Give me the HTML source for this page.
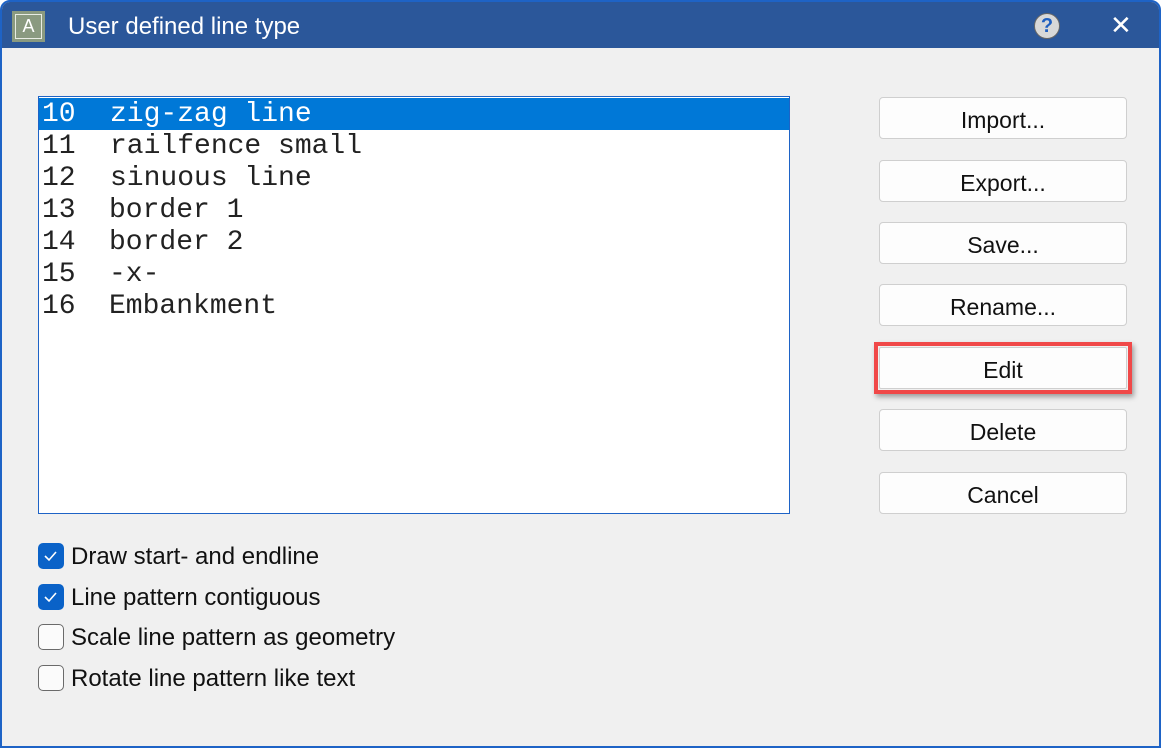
<!DOCTYPE html>
<html><head><meta charset="utf-8"><style>
*{margin:0;padding:0;box-sizing:border-box}
html,body{width:1161px;height:748px;overflow:hidden;background:#fff}
#win{position:absolute;left:0;top:0;width:1161px;height:748px;background:#f0f0f0;border:2px solid #1e63c6;border-radius:10px 10px 0 0;overflow:hidden}
#tb{position:absolute;left:0;top:0;width:100%;height:46px;background:#2b579a}
#title{position:absolute;left:66px;top:11px;color:#fff;font:24px "Liberation Sans",sans-serif}
#icon{position:absolute;left:10px;top:9px;width:33px;height:31px;background:#8a9a80}
#icon div{position:absolute;left:3px;top:3px;width:27px;height:25px;border:1px solid #e8ece4;color:#fff;font:18px "Liberation Sans",sans-serif;text-align:center;line-height:23px}
#help{position:absolute;left:1032px;top:11px;width:26px;height:26px;border-radius:50%;background:#d8d8d8;border:1px solid #666;color:#1f5fc0;font:bold 20px "Liberation Sans",sans-serif;text-align:center;line-height:24px}
#close{position:absolute;left:1108px;top:8px;color:#fff;font:26px "Liberation Sans",sans-serif}
#list{position:absolute;left:36px;top:94px;width:752px;height:418px;background:#fff;border:1px solid #1e63c6}
.row{position:absolute;left:0;width:750px;height:32px;font:28px "Liberation Mono",monospace;color:#222;line-height:34px}
.row span{position:absolute}
.row .n{left:3px}.row .t{left:71px}
.sel{background:#0078d7;color:#fff}
.btn{position:absolute;left:877px;width:248px;height:42px;background:#fdfdfd;border:1px solid #cfcfcf;border-radius:4px;font:23px "Liberation Sans",sans-serif;text-align:center;line-height:44px;color:#111}
#red{position:absolute;left:872px;top:340px;width:258px;height:52px;border:4px solid #f04848;box-shadow:2px 3px 5px rgba(0,0,0,.35)}
.cb{position:absolute;left:36px;width:26px;height:26px;border-radius:5px;border:1.5px solid #6a6a6a;background:#fbfbfb}
.cb.on{background:#0a62c8;border-color:#0a62c8}
.lbl{position:absolute;left:69px;font:24px "Liberation Sans",sans-serif;color:#111}
</style></head><body>
<div id="win">
<div id="tb">
<div id="icon"><div>A</div></div>
<div id="title">User defined line type</div>
<div id="help">?</div>
<div id="close">✕</div>
</div>
<div id="list">
<div class="row sel" style="top:1px"><span class="n">10</span><span class="t">zig-zag line</span></div>
<div class="row" style="top:33px"><span class="n">11</span><span class="t">railfence small</span></div>
<div class="row" style="top:65px"><span class="n">12</span><span class="t">sinuous line</span></div>
<div class="row" style="top:97px"><span class="n">13</span><span class="t" style="left:70px">border 1</span></div>
<div class="row" style="top:129px"><span class="n">14</span><span class="t" style="left:70px">border 2</span></div>
<div class="row" style="top:161px"><span class="n">15</span><span class="t" style="left:70px">-x-</span></div>
<div class="row" style="top:193px"><span class="n">16</span><span class="t" style="left:70px">Embankment</span></div>
</div>
<div class="btn" style="top:95px">Import...</div>
<div class="btn" style="top:158px">Export...</div>
<div class="btn" style="top:220px">Save...</div>
<div class="btn" style="top:282px">Rename...</div>
<div id="red"></div>
<div class="btn" style="top:345px;border-radius:2px">Edit</div>
<div class="btn" style="top:407px">Delete</div>
<div class="btn" style="top:470px">Cancel</div>

<div class="cb on" style="top:541px"><svg width="23" height="23" viewBox="0 0 23 23"><path d="M6 12l4 4 7-8" stroke="#fff" stroke-width="1.6" fill="none"/></svg></div>
<div class="lbl" style="top:541px">Draw start- and endline</div>
<div class="cb on" style="top:582px"><svg width="23" height="23" viewBox="0 0 23 23"><path d="M6 12l4 4 7-8" stroke="#fff" stroke-width="1.6" fill="none"/></svg></div>
<div class="lbl" style="top:582px">Line pattern contiguous</div>
<div class="cb" style="top:622px"></div>
<div class="lbl" style="top:622px">Scale line pattern as geometry</div>
<div class="cb" style="top:663px"></div>
<div class="lbl" style="top:663px">Rotate line pattern like text</div>
</div>
</body></html>
